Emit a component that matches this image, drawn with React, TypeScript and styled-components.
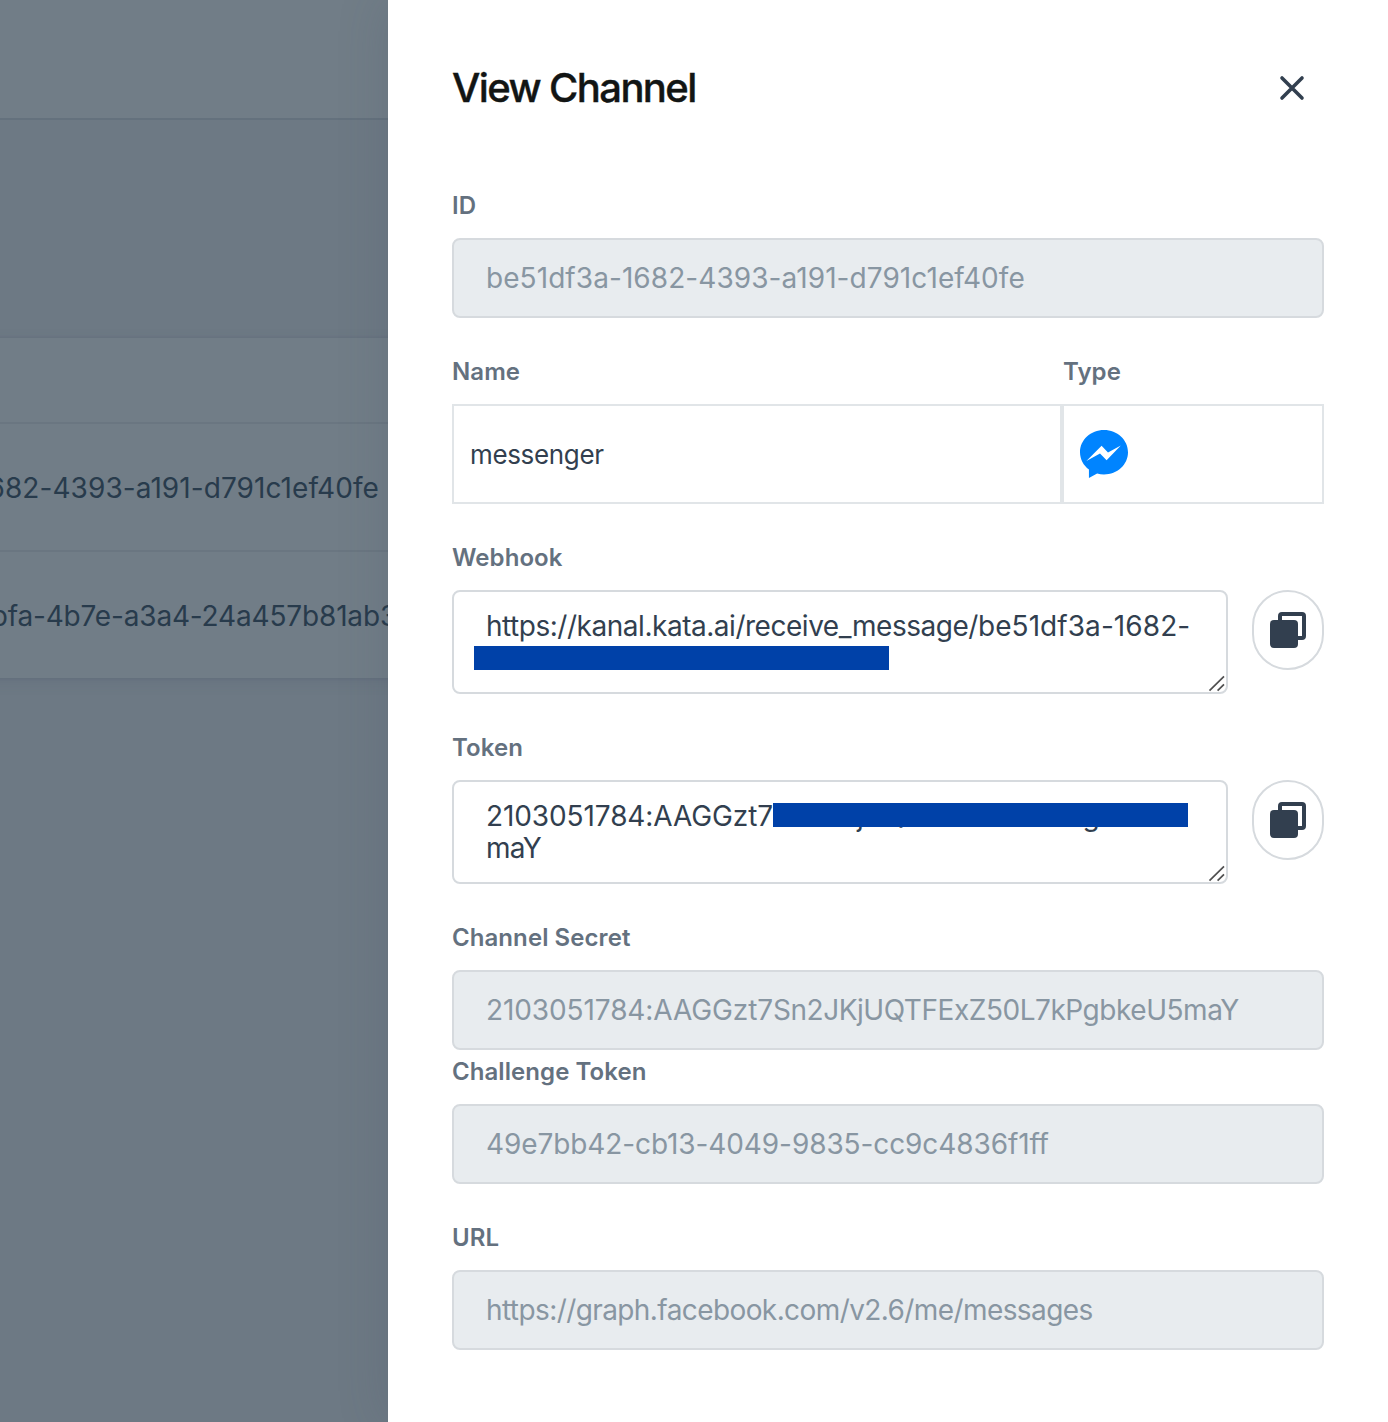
import React from 'react';
import styled, { createGlobalStyle } from 'styled-components';

const GlobalStyle = createGlobalStyle`
  *, *::before, *::after { box-sizing: border-box; }
  body {
    margin: 0;
    background: #6d7984;
    font-family: Inter, 'Liberation Sans', sans-serif;
    -webkit-font-smoothing: antialiased;
  }
`;

const Screen = styled.div`
  display: grid;
  grid-template-columns: 388px minmax(0, 1fr);
  height: 1422px;
  overflow: hidden;
`;

const Backdrop = styled.div`
  display: flex;
  flex-direction: column;
  min-width: 0;
  overflow: hidden;
  background: #6d7984;
`;

const TopBar = styled.div`
  height: 120px;
  flex: none;
  background: #717d87;
  border-bottom: 2px solid #64717d;
`;

const TableCard = styled.div`
  margin: 218px -20px 0;
  padding: 0 20px;
  background: #717d87;
  box-shadow: 0 4px 12px rgba(74, 92, 110, 0.2), 0 0 3px rgba(74, 92, 110, 0.25);
`;

const TableRow = styled.div<{ $height: number; $end: number }>`
  display: flex;
  align-items: center;
  justify-content: flex-end;
  height: ${(p) => p.$height}px;
  padding-top: 2px;
  padding-right: ${(p) => p.$end}px;
  border-bottom: 2px solid #6a7681;
  color: #283b4c;
  font-size: 28px;
  white-space: nowrap;

  &:last-child {
    border-bottom: 0;
  }
`;

const RowId = styled.span<{ $overflow?: number; $track: number }>`
  flex: none;
  letter-spacing: ${(p) => p.$track}px;
  margin-right: ${(p) => -(p.$overflow ?? 0)}px;
`;

const Drawer = styled.aside`
  display: flex;
  flex-direction: column;
  min-width: 0;
  padding: 60px 64px 0;
  background: #fff;
  box-shadow: 0 0 48px rgba(60, 74, 88, 0.18);
  z-index: 1;
`;

const Header = styled.header`
  display: flex;
  align-items: center;
  justify-content: space-between;
  height: 56px;
  margin-bottom: 74px;
  padding-right: 16px;
`;

const Title = styled.h1`
  margin: 0;
  color: #121514;
  font-size: 40px;
  font-weight: 500;
  line-height: 56px;
  letter-spacing: -1.6px;
  -webkit-text-stroke: 0.4px #121514;
`;

const IconButton = styled.button`
  display: flex;
  padding: 0;
  border: 0;
  background: none;
`;

const Field = styled.div<{ $gap?: number }>`
  margin-bottom: ${(p) => p.$gap ?? 38}px;
`;

const Label = styled.div<{ $indent?: number }>`
  height: 32px;
  margin-bottom: 16px;
  padding-left: ${(p) => p.$indent ?? 0}px;
  color: #64717f;
  font-size: 24px;
  font-weight: 600;
  line-height: 32px;
  letter-spacing: 0.07px;
`;

const Input = styled.div`
  display: flex;
  align-items: center;
  height: 80px;
  padding: 0 32px;
  border: 2px solid #d6dade;
  border-radius: 8px;
  background: #e8ecef;
  color: #8896a2;
  font-size: 28px;
  white-space: nowrap;
`;

const Track = styled.span<{ $by: number }>`
  letter-spacing: ${(p) => p.$by}px;
`;

const Split = styled.div`
  display: grid;
  grid-template-columns: 610px 1fr;
  margin-bottom: 38px;
`;

const Cell = styled.div`
  display: flex;
  align-items: center;
  height: 100px;
  padding: 0 16px;
  border: 2px solid #e1e5e8;
  color: #323f4f;
  font-size: 26px;
  letter-spacing: -0.35px;
`;

const CopyRow = styled.div`
  display: flex;
  align-items: flex-start;
  gap: 24px;
`;

const TextArea = styled.div`
  position: relative;
  flex: 1;
  min-width: 0;
  height: 104px;
  padding: 18px 32px;
  border: 2px solid #d6dade;
  border-radius: 8px;
  color: #323f4f;
  font-size: 28px;
  line-height: 32px;
  white-space: nowrap;
`;

const Redaction = styled.span<{ $left: number; $top: number }>`
  position: absolute;
  left: ${(p) => p.$left}px;
  top: ${(p) => p.$top}px;
  width: 415px;
  height: 24px;
  background: #0041a8;
`;

const Grip = styled.svg`
  position: absolute;
  right: 0;
  bottom: 0;
`;

const CopyButton = styled.button`
  display: flex;
  flex: none;
  align-items: center;
  justify-content: center;
  width: 72px;
  height: 80px;
  padding: 0;
  border: 2px solid #d6dade;
  border-radius: 36px;
  background: #fff;
`;

const ResizeGrip = () => (
  <Grip width="18" height="18" viewBox="0 0 18 18" fill="none" stroke="#505050" strokeWidth="1.7">
    <path d="M1.5 16.7L16 2.3M9.6 16.7L16 10.3" />
  </Grip>
);

const CopyIcon = () => (
  <svg width="36" height="36" viewBox="0 0 36 36">
    <rect x="10" y="2" width="24" height="24" rx="2" fill="none" stroke="#323f4f" strokeWidth="4" />
    <rect x="0" y="8" width="28" height="28" rx="4" fill="#323f4f" />
  </svg>
);

const CloseIcon = () => (
  <svg width="32" height="32" viewBox="0 0 32 32" fill="none" stroke="#323f4f" strokeWidth="3.6" strokeLinecap="round">
    <path d="M6 6L26 26M26 6L6 26" />
  </svg>
);

const MessengerIcon = () => (
  <svg width="48" height="48" viewBox="0 0 24 24" fill="#0084ff">
    <path d="M12 0C5.373 0 0 4.974 0 11.111c0 3.498 1.744 6.614 4.469 8.654V24l4.088-2.242c1.092.301 2.246.464 3.443.464 6.627 0 12-4.975 12-11.111S18.627 0 12 0z" />
    <path fill="#fff" d="M13.3 15.1L10 11.8L3.2 15.5L10.8 7.9L14 11.2L20.4 7.8z" />
  </svg>
);

const Copyable = ({ children }: { children: React.ReactNode }) => (
  <CopyRow>
    <TextArea>
      {children}
      <ResizeGrip />
    </TextArea>
    <CopyButton aria-label="Copy">
      <CopyIcon />
    </CopyButton>
  </CopyRow>
);

export default function App() {
  return (
    <>
      <GlobalStyle />
      <Screen>
        <Backdrop>
          <TopBar />
          <TableCard>
            <TableRow $height={86} $end={0} />
            <TableRow $height={128} $end={9}>
              <RowId $track={0.07}>682-4393-a191-d791c1ef40fe</RowId>
            </TableRow>
            <TableRow $height={126} $end={0}>
              <RowId $overflow={9} $track={-0.17}>bfa-4b7e-a3a4-24a457b81ab3</RowId>
            </TableRow>
          </TableCard>
        </Backdrop>
        <Drawer>
          <Header>
            <Title>View Channel</Title>
            <IconButton aria-label="Close">
              <CloseIcon />
            </IconButton>
          </Header>
          <Field>
            <Label>ID</Label>
            <Input>
              <Track $by={0.07}>be51df3a-1682-4393-a191-d791c1ef40fe</Track>
            </Input>
          </Field>
          <Split>
            <div>
              <Label>Name</Label>
              <Cell>messenger</Cell>
            </div>
            <div>
              <Label $indent={1}>Type</Label>
              <Cell>
                <MessengerIcon />
              </Cell>
            </div>
          </Split>
          <Field>
            <Label>Webhook</Label>
            <Copyable>
              <Track $by={-0.47}>https://kanal.kata.ai/receive_message/</Track>
              <Track $by={0.07}>be51df3a-1682-</Track>
              <Redaction $left={20} $top={54} />
            </Copyable>
          </Field>
          <Field>
            <Label>Token</Label>
            <Copyable>
              <Track $by={-0.1}>2103051784:AAGGzt7</Track>
              <Track $by={-0.46}>Sn2JKjUQTFExZ50L7kPgbkeU5</Track>
              <br />
              <Track $by={-0.7}>maY</Track>
              <Redaction $left={319} $top={21} />
            </Copyable>
          </Field>
          <Field $gap={6}>
            <Label>Channel Secret</Label>
            <Input>
              <Track $by={-0.1}>2103051784:AAGGzt7</Track>
              <Track $by={-0.46}>Sn2JKjUQTFExZ50L7kPgbkeU5maY</Track>
            </Input>
          </Field>
          <Field>
            <Label>Challenge Token</Label>
            <Input>
              <Track $by={-0.1}>49e7bb42-cb13-4049-9835-cc9c4836f1ff</Track>
            </Input>
          </Field>
          <Field>
            <Label>URL</Label>
            <Input>
              <Track $by={-0.59}>https://graph.facebook.com/v2.6/me/messages</Track>
            </Input>
          </Field>
        </Drawer>
      </Screen>
    </>
  );
}
